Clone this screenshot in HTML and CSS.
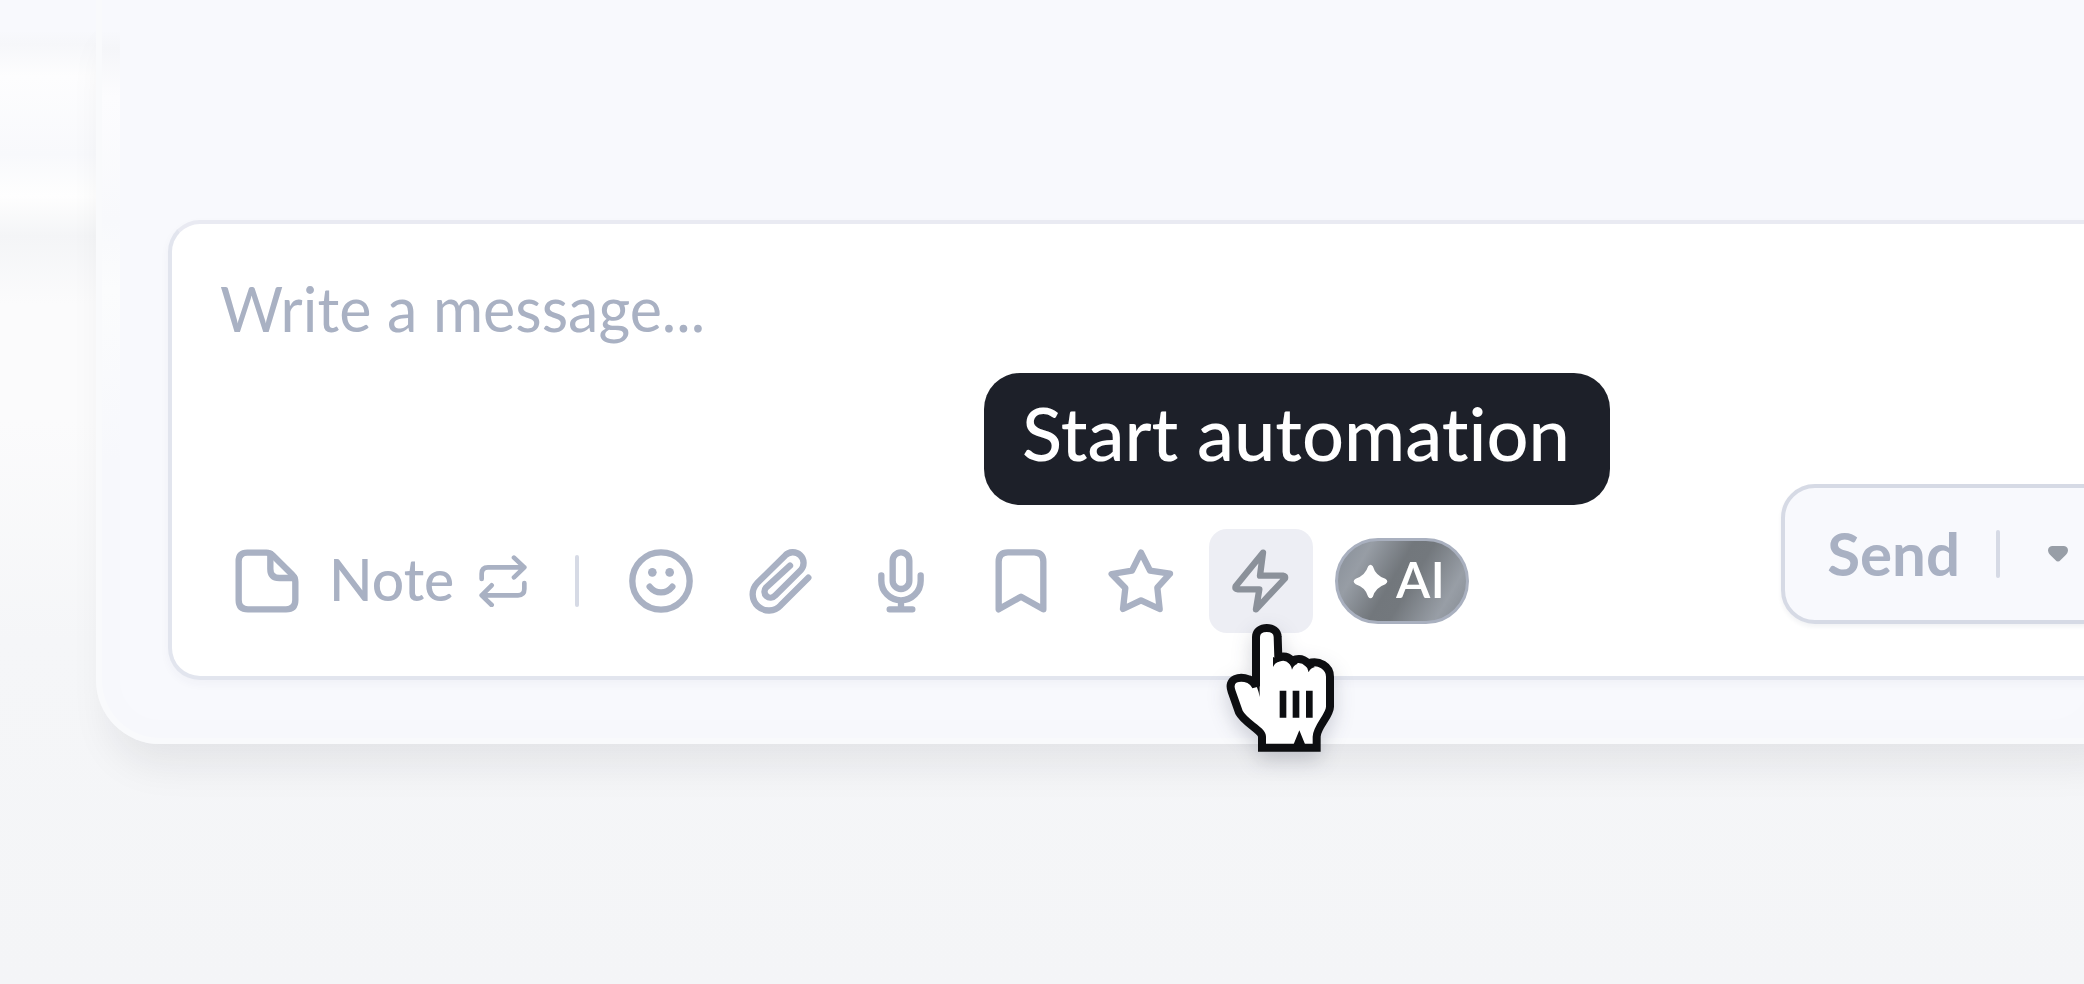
FILE: index.html
```html
<!DOCTYPE html>
<html lang="en">
<head>
    <meta charset="UTF-8">
    <meta name="viewport" content="width=device-width, initial-scale=1.0">
    <title>Message composer</title>
    <link rel="stylesheet" href="styles.css">
</head>
<body>
<main class="panel">
    <div class="conversation">
        <form class="composer">
            <textarea class="message" aria-label="Message" placeholder="Write a message..."></textarea>

            <div class="composer-footer">
                <div class="toolbar">
                    <button type="button" class="note-button">
                        <svg class="icon" viewBox="0 0 192 192">
                            <path d="M37 11H94Q105 11 113 19L172 77Q181 86 181 98V153Q181 181 153 181H39Q11 181 11 153V37Q11 11 37 11Z"/>
                            <path d="M106 14V60Q106 87 133 87H178"/>
                        </svg>
                        <span>Note</span>
                        <svg class="swap-icon" viewBox="0 0 144 156">
                            <path d="M8 72V56Q8 37 27 37H136M105 8L136 37L105 67M136 84V102Q136 121 117 121H8M38 91L8 121L38 150"/>
                        </svg>
                    </button>

                    <span class="divider"></span>

                    <div class="tools">
                        <button type="button" class="tool" aria-label="Emoji">
                            <svg class="icon" viewBox="0 0 192 192">
                                <circle cx="96" cy="96" r="86"/>
                                <circle class="solid" cx="70" cy="70" r="13"/>
                                <circle class="solid" cx="122" cy="70" r="13"/>
                                <path d="M62 113Q76 130 96 130T130 113"/>
                            </svg>
                        </button>
                        <button type="button" class="tool" aria-label="Attach file">
                            <svg class="icon" viewBox="-2 0 192 192">
                                <path d="M176 86L93 169A43 43 0 0 1 22 103L106 20A31 31 0 0 1 153 64L76 140A18 18 0 0 1 49 116L121 50" />
                            </svg>
                        </button>
                        <button type="button" class="tool" aria-label="Record audio">
                            <svg class="icon" viewBox="0 0 192 192">
                                <rect x="71" y="10" width="50" height="110" rx="25"/>
                                <path d="M37 79V95A59 59 0 0 0 155 95V79M96 154V180M62 181H130"/>
                            </svg>
                        </button>
                        <button type="button" class="tool" aria-label="Saved replies">
                            <svg class="icon" viewBox="0 0 192 192">
                                <path d="M29 181V38Q29 10 57 10H135Q163 10 163 38V181L96 143Z"/>
                            </svg>
                        </button>
                        <button type="button" class="tool" aria-label="Favourite">
                            <svg class="icon" viewBox="0 0 192 192">
                                <path d="M96 11L123 65L183 74L145 116L152 180L96 154L42 180L49 117L8 75L69 65Z"/>
                            </svg>
                        </button>
                        <div class="tool-wrap">
                            <button type="button" class="tool active" aria-label="Automation" aria-describedby="automationTip">
                                <svg class="icon" viewBox="0 0 192 192">
                                    <path d="M102 11L20 112Q17 121 26 121H91L81 181L168 88Q170 81 162 80H93Z"/>
                                </svg>
                            </button>
                            <div class="tooltip" id="automationTip" role="tooltip">Start automation</div>
                            <svg class="pointer" viewBox="110 370 325 390">
                                <path class="pointer-hand" d="M199 560V412C199 376 264 376 264 412L266 474Q290 465 307 483Q335 470 356 491C388 480 421 500 421 531V621C421 648 381 682 381 711V744H217V711C217 692 165 670 148 638L126 576C111 535 151 528 178 539Q190 543 199 560Z"/>
                                <path class="pointer-shade" d="M210 592V552L190 542Q204 559 210 592ZM250 472V502Q257 488 272 482ZM291 485Q303 492 307 510Q311 497 324 492L307 478ZM345 492Q354 501 357 518Q362 505 376 502L356 487ZM310 738L329 692L348 738Z"/>
                                <path class="pointer-shade" d="M270 573H290V654H270ZM309 573H329V654H309ZM349 573H369V654H349Z"/>
                            </svg>
                        </div>
                    </div>

                    <button type="button" class="ai-button">
                        <svg class="spark" viewBox="0 0 104 104">
                            <path d="M45 7Q52-3 59 7Q67 35 96 44Q108 52 96 60Q67 70 59 97Q52 107 45 97Q37 69 8 60Q-4 52 8 44Q37 34 45 7Z"/>
                        </svg>
                        <span>AI</span>
                    </button>
                </div>

                <div class="send-group">
                    <button type="submit" class="send">Send</button>
                    <span class="divider"></span>
                    <button type="button" class="send-more" aria-label="Send options">
                        <svg class="caret" viewBox="0 0 60 48">
                            <path d="M12 0H48Q60 2 60 14Q59 21 54 26L38 42Q30 51 22 42L6 26Q1 21 0 14Q0 2 12 0Z"/>
                        </svg>
                    </button>
                </div>
            </div>
        </form>
    </div>
</main>
</body>
</html>
```
FILE: styles.css
```css
* {
    box-sizing: border-box;
}

body {
    margin: 0;
    min-height: 100vh;
    overflow: hidden;
    font-family: 'Lato', sans-serif;
    font-variant-ligatures: none;
    color: #a9b1c3;
    background: linear-gradient(#f8f9fd 0, #f8f9fd 30px, #f6f7fa 44px, #fdfdfe 76px, #f8f9fc 154px, #fefefe 196px, #f4f5f7 236px, #fbfbfc 304px, #fbfbfc 420px, #f5f6f8 640px, #f4f5f7 100%);
}

button {
    border: none;
    padding: 0;
    background: none;
    font-family: inherit;
    color: inherit;
    cursor: pointer;
}

.panel {
    margin: 0 -66px 0 96px;
    padding: 0 54px 18px 18px;
    border: 6px solid #f9fafc;
    border-top: none;
    border-radius: 0 0 64px 64px;
    background: linear-gradient(#f8f9fd 30px, #f5f6f9 48px, #fcfcfe 96px, #f8f9fc 220px, #fbfcfd 290px, #f7f8fc 460px);
    box-shadow: 0 34px 40px -14px rgba(24, 28, 40, 0.08);
}

.conversation {
    padding: 220px 0 40px 48px;
    border-radius: 0 0 40px 40px;
    background-color: #f8f9fd;
}

.composer {
    margin-right: -70px;
    padding: 48px 36px 43px 48px;
    border: 4px solid #e2e5ee;
    border-top-color: #e9eaf2;
    border-radius: 32px;
    background-color: #fff;
    box-shadow: 0 4px 10px rgba(40, 50, 90, 0.04);
}

.message {
    display: block;
    width: 100%;
    height: 212px;
    padding: 0;
    border: none;
    outline: none;
    resize: none;
    background: none;
    font-family: inherit;
    font-size: 61px;
    line-height: 74px;
    color: #1d2029;
}

.message::placeholder {
    color: #a9b1c3;
    opacity: 1;
}

.composer-footer {
    display: flex;
    justify-content: space-between;
    align-items: flex-start;
    height: 149px;
}

.toolbar {
    display: flex;
    align-items: center;
    align-self: flex-end;
    height: 104px;
}

.icon {
    display: block;
    width: 64px;
    height: 64px;
    overflow: visible;
}

.icon,
.swap-icon {
    fill: none;
    stroke: currentColor;
    stroke-width: 19;
    stroke-linecap: round;
    stroke-linejoin: round;
}

.icon .solid {
    fill: currentColor;
    stroke: none;
}

.note-button {
    display: flex;
    align-items: center;
    height: 104px;
    padding: 0 48px 0 15px;
    font-size: 57px;
    font-weight: 500;
    line-height: 64px;
}

.note-button span {
    width: 150px;
    margin-left: 30px;
    padding-bottom: 4px;
    text-align: left;
}

.swap-icon {
    width: 48px;
    height: 52px;
    stroke-width: 14;
}

.divider {
    width: 4px;
    height: 52px;
    border-radius: 2px;
    background-color: #d6dae5;
}

.tools {
    display: flex;
    gap: 16px;
    margin: 0 22px 0 30px;
}

.tool {
    display: flex;
    align-items: center;
    justify-content: center;
    width: 104px;
    height: 104px;
    border-radius: 18px;
}

.tool.active {
    background-color: #edeef4;
    color: #8b919a;
}

.tool-wrap {
    position: relative;
}

.tooltip {
    position: absolute;
    right: -297px;
    bottom: 128px;
    padding: 14px 40px 26px 38px;
    border-radius: 36px;
    background-color: #1d2029;
    color: #fff;
    font-size: 74px;
    font-weight: 500;
    line-height: 92px;
    white-space: nowrap;
}

.pointer {
    position: absolute;
    left: 17px;
    top: 94px;
    width: 109px;
    height: 130px;
    overflow: visible;
    filter: drop-shadow(0 8px 10px rgba(30, 34, 60, 0.2));
    pointer-events: none;
}

.pointer-hand {
    fill: #fff;
    stroke: #0d0e11;
    stroke-width: 24;
}

.pointer-shade {
    fill: #0d0e11;
}

.ai-button {
    display: flex;
    align-items: center;
    justify-content: center;
    gap: 8px;
    width: 134px;
    height: 86px;
    padding-right: 6px;
    border: 3px solid #a9b0bf;
    border-radius: 43px;
    background: linear-gradient(120deg, #8b929b 5%, #979da5 20%, #72777c 44%, #73787d 56%, #989ea6 82%, #858b93 100%);
    color: #fff;
    font-size: 50px;
    font-weight: 600;
    line-height: 64px;
}

.ai-button span {
    padding-bottom: 4px;
}

.spark {
    width: 35px;
    height: 35px;
    fill: currentColor;
}

.send-group {
    display: flex;
    align-items: center;
    height: 140px;
    border: 4px solid #d6dae5;
    border-radius: 34px;
    background-color: #f8f9fd;
    box-shadow: 0 3px 4px rgba(40, 50, 90, 0.06);
}

.send-group .divider {
    height: 48px;
}

.send {
    height: 100%;
    padding: 0 36px 2px 42px;
    font-size: 60px;
    font-weight: 700;
    line-height: 64px;
}

.send-more {
    height: 100%;
    padding: 0 48px;
}

.caret {
    display: block;
    width: 20px;
    height: 16px;
    fill: #989ea7;
}
```
